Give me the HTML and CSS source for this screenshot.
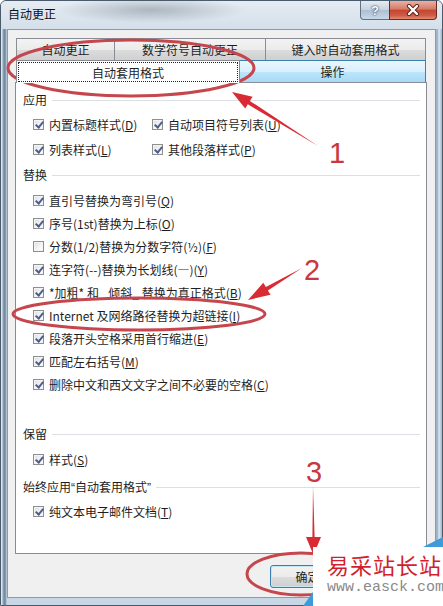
FILE: index.html
```html
<!DOCTYPE html>
<html lang="zh-CN">
<head>
<meta charset="utf-8">
<title>自动更正</title>
<link rel="stylesheet" href="styles.css">
</head>
<body>
<div class="stage">
  <div class="window">
    <div class="titlebar">
      <span class="title">自动更正</span>
      <div class="caption-buttons">
        <span class="cap-btn help">?</span>
        <span class="cap-btn close">
          <svg width="14" height="12" viewBox="0 0 14 12">
            <path d="M3 2 L11 10 M11 2 L3 10" stroke="#5a2018" stroke-width="4.2" stroke-linecap="round"/>
            <path d="M3 2 L11 10 M11 2 L3 10" stroke="#ffffff" stroke-width="2.4" stroke-linecap="round"/>
          </svg>
        </span>
      </div>
    </div>
    <div class="client">
      <div class="tab-row back">
        <div class="tab t-auto">自动更正</div>
        <div class="tab t-math">数学符号自动更正</div>
        <div class="tab t-type">键入时自动套用格式</div>
      </div>
      <div class="tab-row front">
        <div class="tab selected"><span class="focus">自动套用格式</span></div>
        <div class="tab hot">操作</div>
      </div>
      <div class="panel">
        <section class="section s-apply">
          <div class="group-title">应用</div>
          <div class="options two-col">
            <div class="opt"><span class="cb on"></span>内置标题样式(<u>D</u>)</div>
            <div class="opt"><span class="cb on"></span>自动项目符号列表(<u>U</u>)</div>
            <div class="opt"><span class="cb on"></span>列表样式(<u>L</u>)</div>
            <div class="opt"><span class="cb on"></span>其他段落样式(<u>P</u>)</div>
          </div>
        </section>
        <section class="section s-replace">
          <div class="group-title">替换</div>
          <div class="options">
            <div class="opt"><span class="cb on"></span>直引号替换为弯引号(<u>Q</u>)</div>
            <div class="opt"><span class="cb on"></span>序号(1st)替换为上标(<u>O</u>)</div>
            <div class="opt"><span class="cb"></span>分数(1/2)替换为分数字符(½)(<u>F</u>)</div>
            <div class="opt"><span class="cb on"></span>连字符(--)替换为长划线(—)(<u>Y</u>)</div>
            <div class="opt"><span class="cb on"></span>*加粗* 和 _倾斜_ 替换为真正格式(<u>B</u>)</div>
            <div class="opt"><span class="cb on"></span>Internet 及网络路径替换为超链接(<u>I</u>)</div>
            <div class="opt"><span class="cb on"></span>段落开头空格采用首行缩进(<u>E</u>)</div>
            <div class="opt"><span class="cb on"></span>匹配左右括号(<u>M</u>)</div>
            <div class="opt"><span class="cb on"></span>删除中文和西文文字之间不必要的空格(<u>C</u>)</div>
          </div>
        </section>
        <section class="section s-keep">
          <div class="group-title">保留</div>
          <div class="options">
            <div class="opt"><span class="cb on"></span>样式(<u>S</u>)</div>
          </div>
        </section>
        <section class="section s-always">
          <div class="group-title"><span>始终应用<span class="q">“</span>自动套用格式<span class="q">”</span></span></div>
          <div class="options">
            <div class="opt"><span class="cb on"></span>纯文本电子邮件文档(<u>T</u>)</div>
          </div>
        </section>
      </div>
      <div class="footer">
        <button class="btn default">确定</button>
        <button class="btn" aria-label="取消"></button>
      </div>
    </div>
  </div>

  <svg class="annotations" width="443" height="606" viewBox="0 0 443 606">
    <ellipse cx="131" cy="68" rx="123" ry="28" fill="none" stroke="#c5464c" stroke-width="3"/>
    <ellipse cx="139" cy="314" rx="126" ry="16" fill="none" stroke="#c5464c" stroke-width="3"/>
    <ellipse cx="301" cy="574" rx="54" ry="21" fill="none" stroke="#c5464c" stroke-width="3"/>
    <polygon points="318,146 249.9,100.9 252.6,96.7 232,92 245.2,108.5 247.8,104.3" fill="#d92b33"/>
    <polygon points="302,268 267.9,290.5 270.5,294.8 248,300 263.3,282.8 265.9,287.1" fill="#d92b33"/>
    <polygon points="313,486 314.6,537 321,537 313.5,555 306,537 312.4,537" fill="#d92b33"/>
    <text x="337" y="163" class="num">1</text>
    <text x="312" y="280" class="num">2</text>
    <text x="314" y="482" class="num">3</text>
  </svg>

  <div class="watermark">
    <div class="wm-name">易采站长站</div>
    <div class="wm-url">www.easck.com</div>
  </div>
</div>
</body>
</html>
```

FILE: styles.css
```css
* { box-sizing: border-box; }

html, body {
  margin: 0;
  padding: 0;
}

body {
  width: 443px;
  height: 606px;
  overflow: hidden;
  background: #ffffff;
  font-family: "Noto Sans CJK SC", "Noto Sans", sans-serif;
  font-size: 12px;
  color: #1e1e1e;
}

.stage {
  position: relative;
  width: 443px;
  height: 606px;
}

/* ---------- window frame ---------- */
.window {
  width: 443px;
  height: 606px;
  display: flex;
  flex-direction: column;
  border: 1px solid #4a5b6c;
  border-radius: 6px 6px 0 0;
  background:
    linear-gradient(90deg,
      #d9e5f0 0, #d9e5f0 1px,
      #8ea3b7 2px, #6f8599 4px, #c8d7e5 6px,
      #c8d7e5 calc(100% - 7px),
      #8fa7bd calc(100% - 5px), #dde8f1 calc(100% - 3px), #9fb5c9 100%);
}

.titlebar {
  height: 28px;
  display: flex;
  align-items: flex-start;
  border-radius: 5px 5px 0 0;
  background:
    radial-gradient(ellipse 95px 13px at 150px 9px, rgba(110, 122, 136, 0.45), rgba(110, 122, 136, 0)),
    linear-gradient(#e6ecf2, #d3dfea);
}

.title {
  padding-left: 7px;
  line-height: 26px;
  font-size: 12px;
  color: #111;
}

.caption-buttons {
  margin-left: auto;
  margin-right: 5px;
  display: flex;
}

.cap-btn {
  height: 19px;
  display: flex;
  align-items: center;
  justify-content: center;
  border: 1px solid #5f7183;
  border-top: none;
}

.cap-btn.help {
  width: 29px;
  border-radius: 0 0 0 4px;
  border-right: none;
  background: linear-gradient(#e4ebf3 0%, #c6d3e1 48%, #aebfd2 52%, #c9d8e8 100%);
  font-family: "Liberation Sans", sans-serif;
  font-weight: bold;
  font-size: 13px;
  color: #ffffff;
  text-shadow: 0 0 2px #2f3e4e, 0 0 1px #2f3e4e;
}

.cap-btn.close {
  width: 48px;
  border-color: #6c2a20;
  border-radius: 0 0 4px 0;
  background: linear-gradient(#eab0a2 0%, #d67c69 44%, #c24832 52%, #cf5a43 80%, #e38b72 100%);
}

/* ---------- client area ---------- */
.client {
  flex: 1;
  margin: 0 6px 7px 6px;
  display: flex;
  flex-direction: column;
  padding: 8px 8px 0 7px;
  background: #f0f0f0;
  border: 1px solid #8a9bab;
}

.tab-row {
  display: flex;
  height: 22px;
  margin: 0 1px;
}

.tab {
  display: flex;
  align-items: center;
  justify-content: center;
  border: 1px solid #898c95;
  border-bottom: none;
  font-size: 12px;
  color: #1e1e1e;
}

.tab-row.back .tab {
  background: linear-gradient(#f3f3f3 0%, #ebebeb 50%, #dddddd 51%, #cfcfcf 100%);
}

.tab-row.back .tab + .tab { border-left: none; }

.t-auto { width: 99px; }
.t-math { width: 151px; }
.t-type { flex: 1; }

.tab.selected {
  position: relative;
  z-index: 1;
  width: 224px;
  height: 23px;
  padding: 1px;
  background: #ffffff;
}

.tab.selected .focus {
  width: 100%;
  height: 100%;
  display: flex;
  align-items: center;
  justify-content: center;
  outline: 1px dotted #222;
  outline-offset: -1px;
}

.tab.hot {
  flex: 1;
  border-left: none;
  border-color: #3c7fb1;
  background: linear-gradient(#eaf6fd 0%, #d9f0fc 50%, #bee6fd 51%, #a7d9f5 100%);
}

.panel {
  flex: 1;
  background: #ffffff;
  border: 1px solid #898c95;
  padding: 7px 6px 0 7px;
}

.group-title {
  display: flex;
  align-items: center;
  height: 20px;
  line-height: 20px;
  color: #1e1e1e;
}

.group-title::after {
  content: "";
  flex: 1;
  height: 1px;
  margin-left: 5px;
  background: #dcdfe3;
}

.group-title .q {
  font-family: "Liberation Sans", sans-serif;
}

.s-replace .group-title { margin-top: 3px; }
.s-keep .group-title { margin-top: 28px; }
.s-always .group-title { margin-top: 6px; }

.options {
  padding: 4px 0 0 10px;
}

.options.two-col {
  display: grid;
  grid-template-columns: 119px 1fr;
  padding-top: 2px;
}

.s-always .options { padding-top: 3px; }

.opt {
  display: flex;
  align-items: center;
  height: 23px;
  white-space: nowrap;
}

.two-col .opt { height: 25px; }

.opt u {
  text-decoration: underline;
  text-underline-offset: 1px;
}

.cb {
  position: relative;
  flex: none;
  width: 11px;
  height: 11px;
  margin-right: 5px;
  border: 1px solid #8e8f8f;
  background: linear-gradient(135deg, #dcdcdc 0%, #f6f6f6 60%, #ffffff 100%);
  box-shadow: inset 0 0 0 1px #f4f4f4;
}

.cb.on::after {
  content: "";
  position: absolute;
  left: 3px;
  top: 0px;
  width: 3px;
  height: 6px;
  border-right: 2px solid #4d5e8e;
  border-bottom: 2px solid #4d5e8e;
  transform: rotate(40deg);
}

.footer {
  display: flex;
  justify-content: flex-end;
  gap: 7px;
  padding: 11px 0 9px;
}

.btn {
  width: 75px;
  height: 23px;
  padding: 0;
  border: 1px solid #707070;
  border-radius: 3px;
  background: linear-gradient(#f2f2f2 0%, #ebebeb 50%, #dddddd 51%, #cfcfcf 100%);
  font-family: "Noto Sans CJK SC", sans-serif;
  font-size: 12px;
  color: #1e1e1e;
}

.btn.default {
  border-color: #3c7fb1;
  box-shadow: inset 0 0 0 1px #c4e5f6;
}

/* ---------- overlays ---------- */
.annotations {
  position: absolute;
  left: 0;
  top: 0;
  pointer-events: none;
}

.annotations .num {
  font-family: "Liberation Sans", "DejaVu Sans", sans-serif;
  font-size: 29px;
  fill: #c83842;
  text-anchor: middle;
}

.watermark {
  position: absolute;
  left: 313px;
  top: 547px;
  width: 130px;
  height: 59px;
  padding: 3px 0 0 14px;
  background: #ffffff;
}

.watermark::before {
  content: "";
  position: absolute;
  right: 0;
  top: -10px;
  width: 0;
  height: 0;
  border-left: 20px solid transparent;
  border-bottom: 10px solid #3f9bd8;
}

.watermark::after {
  content: "";
  position: absolute;
  left: -10px;
  bottom: 0;
  width: 0;
  height: 0;
  border-left: 10px solid transparent;
  border-bottom: 14px solid #3f9bd8;
}

.wm-name {
  font-family: "Noto Sans CJK SC", sans-serif;
  font-size: 22px;
  line-height: 28px;
  letter-spacing: 1px;
  color: #d21f2e;
  white-space: nowrap;
}

.wm-url {
  font-family: "Liberation Mono", monospace;
  font-size: 15px;
  line-height: 20px;
  color: #8a8a8a;
  white-space: nowrap;
}
```
